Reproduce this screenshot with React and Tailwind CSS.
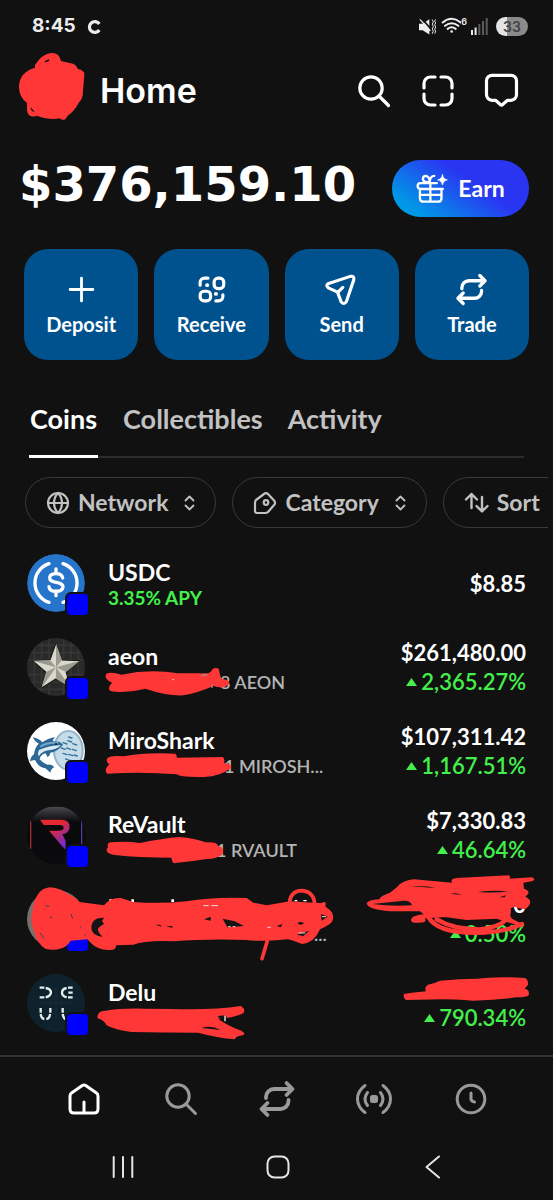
import React from 'react';
import { Globe } from 'lucide-react';

const RED = '#ff3737';

function Stroke({ size = 'size-10', width = 3, box = '0 0 40 40', children }) {
  return (
    <svg viewBox={box} className={`${size} shrink-0`} fill="none" stroke="currentColor" strokeWidth={width} strokeLinecap="round" strokeLinejoin="round" aria-hidden="true">
      {children}
    </svg>
  );
}

function SearchIcon({ width }) {
  return (
    <Stroke width={width}>
      <circle cx="17" cy="17" r="11.2" />
      <path d="M25 25l9.5 9.5" />
    </Stroke>
  );
}

function TradeIcon({ size }) {
  return (
    <Stroke size={size} width={3.8}>
      <path d="M9 19v-1a8 8 0 0 1 8-8h18M29.5 4l6 6-6 6M31.500 21v1a8 8 0 0 1-8 8H5M10.500 24l-6 6 6 6" />
    </Stroke>
  );
}

function Sorter() {
  return (
    <Stroke size="h-4 w-[11px]" width={1.8} box="0 0 11 16">
      <path d="M1.5 5.5l4-4 4 4M1.5 10.5l4 4 4-4" />
    </Stroke>
  );
}

function StatusBar() {
  return (
    <div className="flex h-[51px] items-center justify-between pl-8 pr-[25px] pt-[2px] text-[#ececec]">
      <div className="flex items-center gap-[11px] font-['Inter'] text-[19px] font-bold">
        <span>8:45</span>
        <svg viewBox="0 0 14 16" className="h-4 w-[14px]" fill="none" stroke="currentColor" strokeWidth="3.2" aria-hidden="true">
          <path d="M12.3 5A5.400 5.400 0 1 0 12.3 11" />
        </svg>
      </div>
      <div className="flex items-center gap-1">
        <svg viewBox="420 48 60 56" className="h-[19px] w-5" fill="none" stroke="currentColor" strokeWidth="5" strokeLinecap="round" aria-hidden="true">
          <path d="M426 68h11l20-14v46l-20-13h-11z" fill="currentColor" stroke="none" />
          <path d="M434 52l28 32" stroke="#111" strokeWidth="5" />
          <path d="M430 56l29 32" strokeWidth="4" />
          <path d="M466 56l3 6-3 7 3 7-3 7 3 7-3 7M475 56l-2 4 3 5-3 6 3 6-3 7 3 6-2 6" strokeWidth="3" />
        </svg>
        <div className="flex items-start">
          <svg viewBox="492 48 60 56" className="h-[19px] w-5" fill="none" stroke="currentColor" strokeWidth="6" strokeLinecap="round" aria-hidden="true">
            <path d="M497 64q27-22 54 0M504 74q20-16 40 0M512 83q12-9 24 0" />
            <circle cx="524" cy="91" r="4" fill="currentColor" stroke="none" />
          </svg>
          <span className="font-['Inter'] text-[9px] font-semibold leading-[9px]">6</span>
        </div>
        <svg viewBox="0 0 17 17" className="size-[17px]" aria-hidden="true">
          <path d="M0 12h2v5H0zM3.6 9.5h2V17h-2z" fill="#ececec" />
          <path d="M7.3 6h2v11h-2zM11 3h2v14h-2zM14.7 0h2v17h-2z" fill="#5a5a5a" />
        </svg>
        <div className="ml-1 flex h-[19px] w-8 items-center justify-center rounded-full bg-[linear-gradient(90deg,#e4e4e4_33%,#8b8b8b_33%)] font-['Inter'] text-sm font-semibold text-[#444]">
          33
        </div>
      </div>
    </div>
  );
}

function Header() {
  return (
    <header className="flex h-20 items-center justify-between pl-[19px] pr-[31px]">
      <div className="flex items-center gap-[15px]">
        <svg viewBox="57 162 198 216" className="h-[72px] w-[66px] overflow-visible" aria-hidden="true">
          <path d="M240 290q-6 28-28 42l-8-20z" fill="#777" />
          <path d="M105 192q18-28 38-34 34-8 40 22l36 8q12 6 14 16 22 4 20 18l-4 48q0 24-12 34-16 30-34 40-10 20-24 8-30 6-68-8-26 10-30-16v-22q-24-18-24-48 0-44 48-58z" fill={RED} />
          <path d="M132 184q10-11 16-8 2 5-16 8zM92 318l12 15q-12-1-12-15z" fill="#111" />
        </svg>
        <h1 className="font-['Inter'] text-[34px] font-semibold leading-10">Home</h1>
      </div>
      <div className="flex gap-6">
        <button aria-label="Search"><SearchIcon width={3.2} /></button>
        <button aria-label="Scan">
          <Stroke width={3.2}>
            <path d="M17 6h-4.500a6.500 6.500 0 0 0-6.500 6.500V17M23 6h4.500a6.500 6.500 0 0 1 6.500 6.500V17M34 23v4.500a6.500 6.500 0 0 1-6.500 6.500H23M17 34h-4.500a6.500 6.500 0 0 1-6.500-6.500V23" />
          </Stroke>
        </button>
        <button aria-label="Messages">
          <Stroke width={3.2}>
            <path d="M10 4.300h19a5.500 5.500 0 0 1 5.500 5.500v14a5.500 5.500 0 0 1-5.500 5.500h-3.500l-4.600 4a2 2 0 0 1-2.800 0l-4.600-4H10a5.500 5.500 0 0 1-5.500-5.500v-14a5.500 5.500 0 0 1 5.500-5.500z" />
          </Stroke>
        </button>
      </div>
    </header>
  );
}

const actions = [
  {
    label: 'Deposit',
    icon: <Stroke size="size-[35px]" width={3.2}><path d="M20 7v26M7 20h26" /></Stroke>,
  },
  {
    label: 'Receive',
    icon: (
      <Stroke size="size-[35px]" width={3.6}>
        <path d="M7 15v-3a5 5 0 0 1 5-5h4M33 26v2a5 5 0 0 1-5 5h-3" />
        <rect x="23" y="7" width="11" height="12" rx="4.500" />
        <rect x="7" y="22" width="12" height="11" rx="4.500" />
        <path d="M15 15h.1M25 25h.1" strokeWidth="4.500" />
      </Stroke>
    ),
  },
  {
    label: 'Send',
    icon: (
      <Stroke size="size-[35px]" width={3.6}>
        <path d="M4.500 13.500L30 5q5-1 4 4l-8.500 25q-2.500 4-6 0l-4-11-10-4.500q-4-3-1-5zM16 23l5.500-5.500" />
      </Stroke>
    ),
  },
  { label: 'Trade', icon: <TradeIcon size="size-[35px]" /> },
];

const coins = [
  {
    name: 'USDC',
    note: '3.35% APY',
    value: '$8.85',
    avatar: (
      <>
        <circle cx="87" cy="87" r="87" fill="#2775ca" />
        <path d="M66 29a61 61 0 0 0 0 116M108 29a61 61 0 0 1 0 116M87 45v14M87 111v14M107 72q-2-13-20-13-19 0-19 13c0 18 40 8 40 27q-2 13-21 13-19 0-21-14" fill="none" stroke="#fff" strokeWidth="10" strokeLinecap="round" />
      </>
    ),
  },
  {
    name: 'aeon',
    sub: '8 AEON',
    indent: 'pl-[112px]',
    value: '$261,480.00',
    change: '2,365.27%',
    avatar: (
      <>
        <rect width="174" height="174" fill="#292929" />
        <path d="M0 22h174M0 44h174M0 66h174M0 110h174M0 132h174M0 154h174M22 0v174M44 0v174M66 0v174M110 0v174M132 0v174M154 0v174" stroke="#363634" strokeWidth="5" />
        <path d="M87 16l18 50 54 2-42 34 15 48-45-28-44 28 14-48-40-34 52-2z" fill="#d9d8cc" stroke="#111" strokeWidth="3" />
        <path d="M87 88V16l18 50zM87 88l72-20-42 34zM87 88l45 62-45-28zM87 88l-44 62 14-48zM87 88L17 68l52-2z" fill="#9b9a90" />
      </>
    ),
    scribble: (
      <>
        <path d="M318 402q14-8 46 2 86-18 170-4h92l8-6q6-14 22-8 4 20 8 30 28 2 22 18-16 14-46 4-50 22-90 28-50 2-114-20-64 14-102 8-16-6 2-26-24-10-18-26z" fill={RED} />
        <path d="M517 419h5" stroke="#ddd" strokeWidth="3" />
        <path d="M604 407l18-3M636 434v10" stroke="#999" strokeWidth="4" />
      </>
    ),
    scribbleBox: '0 255 1020 252',
  },
  {
    name: 'MiroShark',
    sub: '1 MIROSH...',
    indent: 'pl-[116px]',
    value: '$107,311.42',
    change: '1,167.51%',
    avatar: (
      <>
        <rect width="174" height="174" fill="#fff" />
        <ellipse cx="124" cy="85" rx="43" ry="58" fill="#c5dcea" stroke="#95b4c8" strokeWidth="6" />
        <path d="M108 62l12 4M122 56l12 4M137 65l12 4M103 78l12 4M119 78l12 4M136 82l12 4M108 94l12 4M125 97l12 4M141 99l10 3M116 111l12 4M132 115l10 3M125 45l10 3" stroke="#397499" strokeWidth="4" strokeLinecap="round" />
        <path d="M17 46q20 4 29 15Q66 48 84 46q-7 7-7 12 23-1 31 10-18 22-38 24 0 8-8 14-4-8-6-12-16 4-18 18 10 12 24 16 14-2 20 8-10 4-12 16-8-8-15-13-22-4-30-24-12-2-16 4 2-16 12-22 2-20 14-32Q24 60 17 46z" fill="#2d6795" />
        <path d="M36 84q30-14 66-14-14 14-38 15-22 4-28 18-6-6 0-19z" fill="#dcebf2" />
        <path d="M40 74q21-14 53-11" fill="none" stroke="#72a9c9" strokeWidth="6" />
        <circle cx="87" cy="66" r="3" fill="#111" />
      </>
    ),
    scribble: (
      <path d="M322 160q10-10 50-6 60-12 154-8 6 6 4 12l138-2q8 6 4 18 28 4 20 16-30 24-80 26-70 2-82-8-100-8-208-2-12-10 6-28-12-8-6-18z" fill={RED} />
    ),
    scribbleBox: '0 12 1020 252',
  },
  {
    name: 'ReVault',
    sub: '1 RVAULT',
    indent: 'pl-[108px]',
    value: '$7,330.83',
    change: '46.64%',
    avatar: (
      <>
        <defs>
          <linearGradient id="rv" gradientUnits="userSpaceOnUse" x1="60" y1="45" x2="112" y2="120">
            <stop offset="0.300" stopColor="#e52931" />
            <stop offset="1" stopColor="#712ad5" />
          </linearGradient>
          <linearGradient id="shine" x1="0" y1="0" x2="0" y2="1">
            <stop stopColor="#4a4a4f" />
            <stop offset="1" stopColor="#0a090c" />
          </linearGradient>
        </defs>
        <rect width="174" height="174" fill="#0a090c" />
        <rect x="10" y="2" width="156" height="46" fill="url(#shine)" />
        <path d="M11 44v85" stroke="#9b3037" strokeWidth="4" />
        <path d="M164 44v85" stroke="#563899" strokeWidth="4" />
        <path d="M39 41h66q24 2 23 23-2 18-22 21l10 20v28L66 74h28q16 0 16-9 0-8-12-8H50z" fill="url(#rv)" />
      </>
    ),
    scribble: (
      <path d="M332 412q46-4 88 2 70-14 118-18 48 4 78 16 36-2 38 10 20 6 14 24-16 16-48 16-50 8-94 12-8 4-12-16-98 0-170-8-34-6-20-24-4-12 8-14z" fill={RED} />
    ),
    scribbleBox: '0 264 1020 252',
  },
  {
    name: '',
    sub: '...',
    indent: 'pl-[206px]',
    value: '0',
    change: '0.50%',
    avatar: <rect width="174" height="174" fill="#77706d" />,
    scribble: (
      <>
        <path d="M328 92h8M394 92h8M514 92h8" stroke="#fff" strokeWidth="8" />
        <path d="M96 130Q104 56 150 52Q182 54 210 76Q230 84 238 96L312 106Q330 82 362 84L400 96Q480 102 560 94Q640 80 740 84L760 98L800 106L870 94L940 98L972 100L980 114L998 138Q996 164 960 178Q944 218 906 222Q872 208 860 208Q780 216 740 210Q620 206 520 214Q440 210 400 224L348 226Q350 242 326 240Q290 238 272 218L262 208L212 212Q200 232 180 236Q160 242 136 236Q112 222 104 190Q90 160 96 130Z" fill={RED} />
        <path d="M868 104q2-42 38-42 38 4 38 44M960 112q34 10 34 28 0 22-34 26M950 110l22-8M802 212l-16 54" fill="none" stroke={RED} strokeWidth="11" strokeLinecap="round" />
        <path d="M312 143q-38-2-38 32 0 20 34 26-20-20-12-28l16-12-6-8zM612 148l20-8v12zM668 146l36 8 28 14-50 4zM466 164h14l6 6zM498 168h18l2 6zM830 168l18-6-6 10zM892 160q10-8 20 0-10 8-20 0zM890 194l38-12-18 16zM690 198h26M963 132l20 8-18 12z" fill="#151515" />
        <path d="M610 107h16M634 107h20M802 172h10M684 170h8M698 170h8M896 189h20M966 140h12" stroke="#ddd" strokeWidth="3" />
        <path d="M136 108h12M150 142h6M240 171h4M253 195h4M120 188l12 18M213 132l5 14" stroke="#345" strokeWidth="3" />
        <path d="M884 92h8M910 92h10" stroke="#fff" strokeWidth="4" />
      </>
    ),
    scribbleBox: '0 21 1020 252',
    cover: (
      <>
        <path d="M80 130Q84 120 118 118Q120 108 150 98Q160 90 172 80Q190 60 222 58L336 68Q330 56 350 54L506 46Q514 52 508 56L576 52Q590 58 576 64L550 68L552 86Q570 92 564 102L556 110Q574 118 570 130Q566 144 552 148Q534 144 522 140L500 152L516 176L552 194L546 200L470 176L380 180L320 172L260 170L240 154L150 154Q82 148 80 130Z" fill={RED} />
        <path d="M260 158q14 54 120 60 106 4 166-26M250 180q-32 4-30 0 0-12 80-14M290 178q50 30 130 30 90-10 86-58" fill="none" stroke={RED} strokeWidth="13" strokeLinecap="round" strokeLinejoin="round" />
        <path d="M96 132l96-10q22 0 24 14-60 4-120-4zM212 78q50-2 78 7zM332 102q14-6 34 2zM414 96q40-6 90-2-30 6-90 2zM478 112l20-6-4 6z" fill="#151515" />
      </>
    ),
    coverBox: '0 51 639 252',
  },
  {
    name: 'Delu',
    sub: 'DELU',
    indent: 'pl-[65px]',
    value: '',
    change: '790.34%',
    avatar: (
      <>
        <rect width="174" height="174" fill="#0d222d" />
        <path d="M87 65l22 22-22 22-22-22zM40 87h94M87 40v94" fill="none" stroke="#26333a" strokeWidth="2" />
        <path d="M38 41h14M56 42q16 3 16 14-2 10-16 14M52 70H38M137 41h-14M119 42q-14 3-14 14 0 10 14 14M123 70h14M124 56h13M41 102v14M41 120q2 14 11 15M58 135q10-1 11-15M70 116v-14M107 102v14M107 120q2 14 10 17" fill="none" stroke="#e5eeee" strokeWidth="7" />
      </>
    ),
    scribble: (
      <>
        <path d="M292 440q2-18 24-18 46-8 120-6 80 0 140 2 80 0 146-10 16 8 8 22-28 14-76 16 30 22 70 36 16 10 4 14-20 2-24 12-50-4-110-20-100 0-200-2-50-6-74-20-4-10-18-18-10-2-10-8z" fill={RED} />
        <path d="M604 474q30-10 58 6zM652 440q14-6 28-2l-4 16z" fill="#151515" />
        <path d="M675 437v17" stroke="#aaa" strokeWidth="6" />
      </>
    ),
    scribbleBox: '0 273 1020 252',
    cover: (
      <path d="M192 402q40-6 66-8-6-14 6-20 20-4 36-12 60-6 110-6 60-8 146-2 10 6 8 20l-10 12q16 2 12 20-6 6-36 6-60 8-130 10-60-4-90-4l-112 2q-10-8-6-18z" fill={RED} />
    ),
    coverBox: '0 303 639 252',
  },
];

function CoinRow({ coin }) {
  return (
    <li className="relative flex h-[84px] items-center px-[27px]">
      <div className="relative size-[58px] shrink-0">
        <svg viewBox="0 0 174 174" className="size-full rounded-full" aria-hidden="true">{coin.avatar}</svg>
        <span className="absolute -bottom-[5px] -right-[5px] size-[25px] rounded-md border-2 border-[#111] bg-[#0000fe]" />
      </div>
      <div className="ml-[23px] flex-1 pt-px">
        <p className="h-7 text-[23px] font-bold leading-7">{coin.name}</p>
        {coin.note && <p className="h-6 text-[19px] font-bold leading-6 text-[#43f04b]">{coin.note}</p>}
        {coin.sub && <p className={`h-6 text-[18px] font-semibold leading-6 text-[#b4b4b4] ${coin.indent}`}>{coin.sub}</p>}
      </div>
      <div className="text-right text-[22px] leading-[29px]">
        <p className="min-h-[29px] font-bold">{coin.value}</p>
        {coin.change && (
          <p className="flex items-center justify-end gap-1 font-semibold text-[#43f04b]">
            <svg viewBox="0 0 11 8" className="h-2 w-[11px]" fill="currentColor" aria-hidden="true"><path d="M5.500 0L11 8H0z" /></svg>
            {coin.change}
          </p>
        )}
      </div>
      {coin.scribble && (
        <svg viewBox={coin.scribbleBox} className="pointer-events-none absolute left-0 top-0 h-[84px] w-[340px] overflow-visible" aria-hidden="true">{coin.scribble}</svg>
      )}
      {coin.cover && (
        <svg viewBox={coin.coverBox} className="pointer-events-none absolute right-0 top-0 h-[84px] w-[213px] overflow-visible" aria-hidden="true">{coin.cover}</svg>
      )}
    </li>
  );
}

function Chip({ icon, label, sorter = true }) {
  return (
    <button className="flex h-[51px] shrink-0 items-center rounded-full border border-[#3a3a3a] px-5 text-[23px] font-bold text-[#c2c2c2]">
      {icon}
      <span className="ml-2 mr-4">{label}</span>
      {sorter && <Sorter />}
    </button>
  );
}

export default function App() {
  return (
    <div className="flex min-h-screen flex-col overflow-hidden bg-[#111] font-['Lato',sans-serif] text-white">
      <StatusBar />
      <Header />

      <main className="flex-1">
        <section className="flex h-[115px] items-center justify-between pl-[19px] pr-6">
          <p className="pb-2 font-['DejaVu_Sans'] text-[48px] font-bold leading-[57px]">$376,159.10</p>
          <button className="flex h-[57px] w-[137px] items-center justify-center gap-[10px] rounded-full bg-[linear-gradient(35deg,#0098e6_15%,#2a35f2_60%)] text-[23px] font-bold">
            <Stroke size="h-[31px] w-8" width={7} box="414 519 98 93">
              <path d="M426 571v24q0 11 11 11h44q11 0 11-11v-24M496 567h-68q-9 0-9-9t9-9h50M458 549v57M456 547q-20 0-21-10 0-10 10-10 11 3 11 20 1-20 14-20M426 585h66" />
              <path d="M495 523q2 14 15 16-13 2-15 16-2-14-15-16 13-2 15-16z" fill="currentColor" strokeWidth="2" />
            </Stroke>
            Earn
          </button>
        </section>

        <section className="grid grid-cols-4 gap-4 px-6 pt-[3px]">
          {actions.map((action) => (
            <button key={action.label} className="flex h-[111px] flex-col items-center justify-center gap-[3px] rounded-3xl bg-[#00528f] text-[20px] font-bold leading-7">
              {action.icon}
              {action.label}
            </button>
          ))}
        </section>

        <nav className="mx-[29px] mt-[35px] flex h-[63px] gap-[25px] border-b-2 border-[#2c2c2c] text-[27px] font-bold leading-[48px] text-[#c2c2c2]">
          <a href="#coins" className="-mb-[2px] border-b-[3px] border-white px-px text-white">Coins</a>
          <a href="#collectibles">Collectibles</a>
          <a href="#activity">Activity</a>
        </nav>

        <div className="ml-[25px] mr-[5px] mt-[19px] flex gap-4 overflow-hidden">
          <Chip icon={<Globe className="size-6" strokeWidth={2.2} />} label="Network" />
          <Chip
            icon={
              <Stroke size="size-6" width={2.2} box="0 0 24 24">
                <path d="M2 12q0-2 1-3l8-6q2-2 4 0l6.500 7q1 2 0 3.500L15 21q-1 1-3 1H4q-2 0-2-2z" />
                <circle cx="13" cy="11.500" r="2.300" />
              </Stroke>
            }
            label="Category"
          />
          <Chip
            icon={
              <Stroke size="h-6 w-[25px]" width={2.4} box="0 0 25 24">
                <path d="M7.500 17V3M2 8.500L7.500 3l5.500 5.500M18 6v14M12.500 15l5.500 5.500 5.500-5.500" />
              </Stroke>
            }
            label="Sort"
            sorter={false}
          />
        </div>

        <ul className="pb-[10px] pt-[13px]">
          {coins.map((coin, i) => (
            <CoinRow key={i} coin={coin} />
          ))}
        </ul>
      </main>

      <nav className="grid grid-cols-5 justify-items-center border-t-2 border-[#333] pb-[20px] pl-[36px] pr-[34px] pt-[22px] text-[#999]">
        <a href="#home" aria-label="Home" className="text-white">
          <Stroke>
            <path d="M6 17q0-2 1.500-3l10.800-7.500q1.700-1 3.400 0L32.500 14q1.500 1 1.500 3v13q0 4-4 4H10q-4 0-4-4zM20 23v10" />
          </Stroke>
        </a>
        <a href="#search" aria-label="Search"><SearchIcon width={3} /></a>
        <a href="#trade" aria-label="Trade"><TradeIcon /></a>
        <a href="#live" aria-label="Live">
          <Stroke>
            <path d="M11 6.500q-7.500 5.500-7.500 13.500t7.500 13.500M29 6.500q7.500 5.500 7.500 13.500t-7.500 13.500M13.500 13.500q-5 6.500 0 13M26.500 13.500q5 6.500 0 13" />
            <rect x="17.500" y="17.500" width="5" height="5" rx="1" fill="currentColor" />
          </Stroke>
        </a>
        <a href="#history" aria-label="History">
          <Stroke>
            <circle cx="20" cy="20" r="13.800" />
            <path d="M20 14v6q0 2 3.500 3" />
          </Stroke>
        </a>
      </nav>

      <div className="grid grid-cols-3 justify-items-center pb-[18px] pl-[45px] pr-[43px] pt-[13px] text-[#e5e5e5]">
        <button aria-label="Recents">
          <Stroke size="size-[30px]" width={2} box="0 0 30 30"><path d="M5.700 5v20M15 5v20M24.300 5v20" /></Stroke>
        </button>
        <button aria-label="Home screen">
          <Stroke size="size-[30px]" width={2} box="0 0 30 30"><rect x="4.500" y="4.500" width="21" height="21" rx="7" /></Stroke>
        </button>
        <button aria-label="Back">
          <Stroke size="size-[30px]" width={2} box="0 0 30 30"><path d="M21 4.500L8.500 15 21 25.500" /></Stroke>
        </button>
      </div>
    </div>
  );
}
